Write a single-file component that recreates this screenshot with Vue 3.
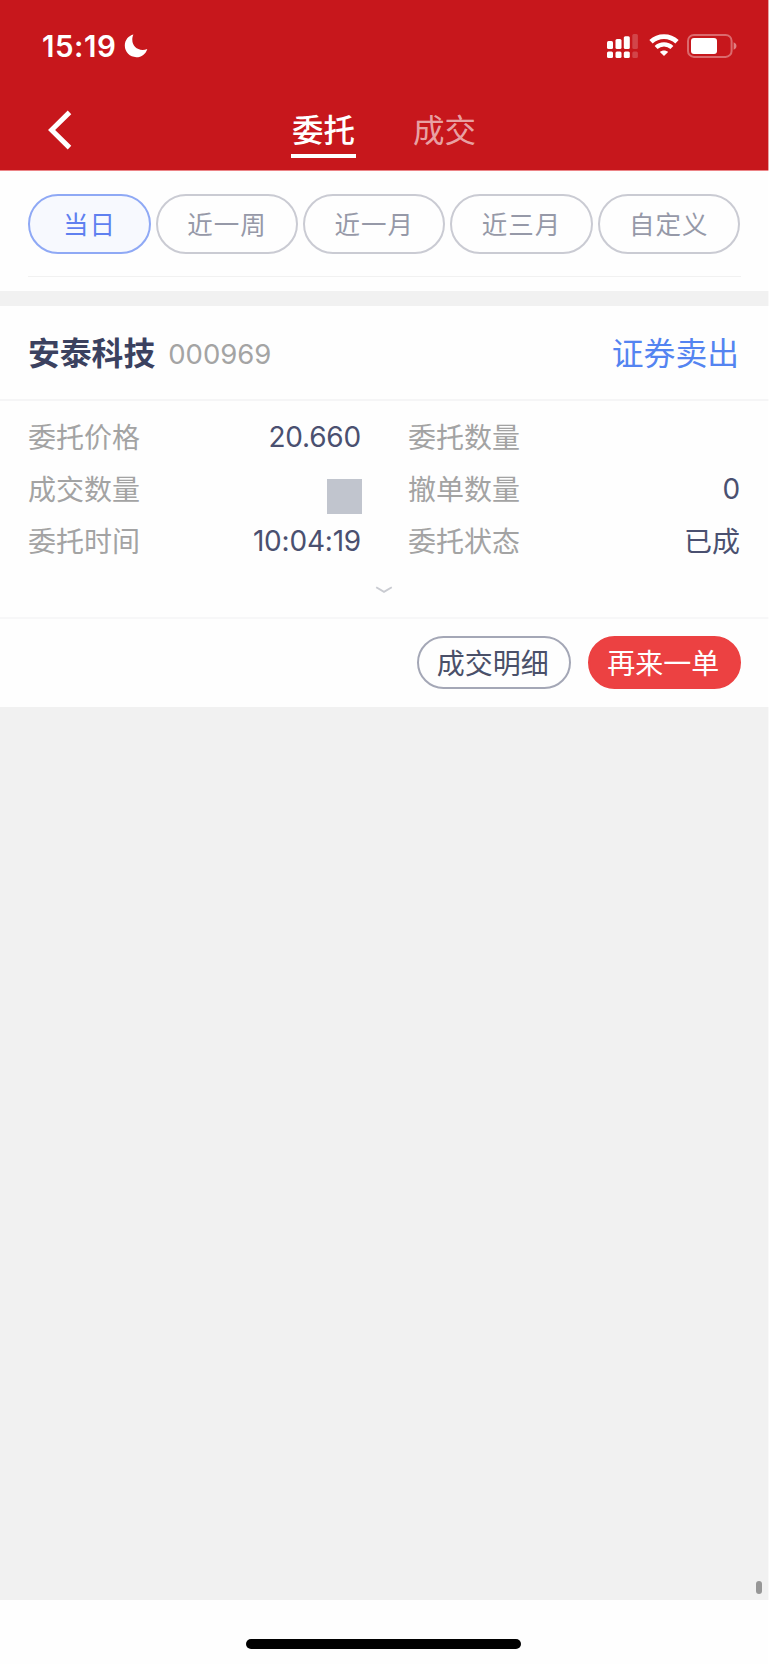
<template>
  <div class="page">
    <header class="header">
      <div class="status-bar">
        <div class="status-left">
          <span class="time">15:19</span>
          <svg class="moon" width="24" height="24" viewBox="0 0 24 24">
            <path d="M9.4 0.6C4.6 1.8 0.8 6 0.8 11.6C0.8 18.2 5.9 23.2 12.3 23.2C17.6 23.2 21.8 19.9 23.3 14.9C21.6 15.6 20.2 15.9 18.6 15.9C12.6 15.9 8.3 11.7 8.3 5.8C8.3 3.8 8.6 2.2 9.4 0.6Z" fill="#fff" />
          </svg>
        </div>
        <div class="status-right">
          <svg width="32" height="26" viewBox="0 0 32 26" fill="#fff">
            <rect x="0" y="8" width="6" height="8" rx="1.5" />
            <rect x="8.5" y="6" width="6" height="10" rx="1.5" />
            <rect x="16.8" y="3.3" width="6" height="12.7" rx="1.5" />
            <rect x="25.3" y="1" width="5.6" height="15" rx="1.5" opacity="0.2" />
            <rect x="0" y="18.6" width="6" height="6.4" rx="1.5" />
            <rect x="8.5" y="18.6" width="6" height="6.4" rx="1.5" />
            <rect x="16.8" y="18.6" width="6" height="6.4" rx="1.5" />
            <rect x="25.3" y="18.6" width="5.6" height="6.4" rx="1.5" opacity="0.2" />
          </svg>
          <svg class="wifi" width="30" height="26" viewBox="0 0 30 26">
            <path d="M2 8.7C9.3 1.8 20.7 1.8 28 8.7" fill="none" stroke="#fff" stroke-width="4.8" />
            <path d="M7.1 14.5C11.5 10.3 18.5 10.3 22.9 14.5" fill="none" stroke="#fff" stroke-width="4.2" />
            <path d="M15 23L10.9 18.9C13.1 16.9 16.9 16.9 19.1 18.9Z" fill="#fff" />
          </svg>
          <svg class="battery" width="50" height="26" viewBox="0 0 50 26">
            <rect x="1" y="1.9" width="43.6" height="22" rx="6" fill="none" stroke="#fff" stroke-opacity="0.36" stroke-width="2" />
            <rect x="4" y="5" width="26" height="16" rx="3" fill="#fff" />
            <path d="M46.6 9.3C50.4 10.6 50.4 15.4 46.6 16.7Z" fill="#fff" opacity="0.45" />
          </svg>
        </div>
      </div>
      <nav class="nav">
        <svg class="back" width="26" height="42" viewBox="0 0 26 42">
          <path d="M22.5 3.4L4.6 21L22.5 38.6" fill="none" stroke="#fff" stroke-width="5" />
        </svg>
        <div class="tabs">
          <span
            v-for="tab in tabs"
            :key="tab"
            class="tab"
            :class="{ active: tab === activeTab }"
            @click="activeTab = tab"
          >{{ tab }}</span>
        </div>
      </nav>
    </header>

    <section class="filter">
      <div class="filter-list">
        <button
          v-for="item in ranges"
          :key="item"
          class="pill"
          :class="{ active: item === activeRange }"
          @click="activeRange = item"
        >{{ item }}</button>
      </div>
    </section>

    <section class="order">
      <div class="order-head">
        <div class="stock">
          <span class="stock-name">安泰科技</span>
          <span class="stock-code">000969</span>
        </div>
        <span class="side">证券卖出</span>
      </div>

      <div class="order-body">
        <div class="fields">
          <div v-for="field in fields" :key="field.label" class="field">
            <span class="label">{{ field.label }}</span>
            <span v-if="field.masked" class="mask"></span>
            <span v-else class="value" :class="{ cjk: field.cjk }">{{ field.value }}</span>
          </div>
        </div>
        <svg class="expand" width="18" height="8" viewBox="0 0 18 8">
          <path d="M1.2 1.3L9 5.8L16.8 1.3" fill="none" stroke="#c9cbd1" stroke-width="1.9" />
        </svg>
      </div>

      <div class="order-foot">
        <button class="btn btn-plain">成交明细</button>
        <button class="btn btn-red">再来一单</button>
      </div>
    </section>

    <main class="blank">
      <i class="scroll-thumb"></i>
    </main>

    <footer class="home">
      <i class="home-bar"></i>
    </footer>
  </div>
</template>

<script setup>
import { ref } from 'vue'

const tabs = ['委托', '成交']
const activeTab = ref('委托')

const ranges = ['当日', '近一周', '近一月', '近三月', '自定义']
const activeRange = ref('当日')

const fields = [
  { label: '委托价格', value: '20.660' },
  { label: '委托数量', value: '' },
  { label: '成交数量', masked: true },
  { label: '撤单数量', value: '0' },
  { label: '委托时间', value: '10:04:19' },
  { label: '委托状态', value: '已成', cjk: true }
]
</script>

<style>
body {
  margin: 0;
  background: #fefefe;
}
</style>

<style scoped>
.page {
  position: relative;
  display: flex;
  flex-direction: column;
  width: 769px;
  height: 1664px;
  overflow: hidden;
  background: #fefefe;
  font-family: Inter, "Noto Sans CJK SC", sans-serif;
}

/* right edge of the screen */
.page::after {
  content: '';
  position: absolute;
  top: 0;
  right: 0;
  width: 1px;
  height: 100%;
  background: rgba(255, 255, 255, 0.6);
}

.header {
  height: 170px;
  background: #c7171c;
  border-bottom: 1px solid #ec8487;
}

.status-bar {
  display: flex;
  justify-content: space-between;
  align-items: center;
  height: 92px;
  padding: 0 32px 0 42px;
}

.status-left,
.status-right {
  display: flex;
  align-items: center;
}

.time {
  color: #fff;
  font-size: 29.5px;
  font-weight: 600;
  line-height: 36px;
  letter-spacing: 0.5px;
}

.moon {
  margin-left: 8px;
}

.wifi {
  margin-left: 10px;
}

.battery {
  margin-left: 8px;
}

.nav {
  display: flex;
  align-items: flex-start;
  height: 78px;
}

.back {
  margin: 17px 0 0 47px;
}

.tabs {
  display: flex;
  gap: 56px;
  margin-left: 218px;
}

.tab {
  box-sizing: border-box;
  height: 66px;
  width: 65px;
  padding-top: 16px;
  color: rgba(255, 255, 255, 0.62);
  font-size: 31.5px;
  line-height: 46px;
  text-align: center;
  white-space: nowrap;
}

.tab.active {
  color: #fff;
  font-weight: 500;
  border-bottom: 4px solid #fff;
}

.filter {
  box-sizing: border-box;
  height: 120px;
  padding: 23px 28px 0 28px;
}

.filter-list {
  display: flex;
  gap: 5px;
  height: 82px;
  border-bottom: 1px solid #f1f1f1;
}

.pill {
  box-sizing: border-box;
  flex: 0 0 142.2px;
  height: 60px;
  padding: 0 0 4px;
  border: 2px solid #cacbd3;
  border-radius: 30px;
  background: transparent;
  color: #9699a8;
  font-family: inherit;
  font-size: 25.5px;
  letter-spacing: 1px;
  white-space: nowrap;
}

.pill.active {
  flex-basis: 123px;
  border-color: #8fa9f5;
  background: #f7f9fe;
  color: #5f80f0;
}

.order {
  border-top: 15px solid #f1f1f1;
}

.order-head {
  box-sizing: border-box;
  display: flex;
  justify-content: space-between;
  align-items: center;
  height: 95px;
  padding: 2px 30px 0 28px;
  border-bottom: 2px solid #f5f5f6;
}

.stock {
  display: flex;
  align-items: center;
}

.stock-name {
  color: #3b415f;
  font-size: 31.8px;
  font-weight: 700;
  line-height: 46px;
}

.stock-code {
  margin-left: 13px;
  color: #a4a4a4;
  font-size: 27.5px;
  line-height: 46px;
}

.side {
  color: #5484f1;
  font-size: 31.8px;
  line-height: 46px;
}

.order-body {
  box-sizing: border-box;
  display: flex;
  flex-direction: column;
  align-items: center;
  height: 218px;
  padding-top: 10px;
  border-bottom: 2px solid #f7f7f8;
}

.fields {
  display: grid;
  grid-template-columns: 333px 332px;
  grid-auto-rows: 52px;
  column-gap: 47px;
  width: 712px;
  margin-right: 1px;
}

.field {
  display: flex;
  justify-content: space-between;
  align-items: center;
  font-size: 28px;
  line-height: 40px;
}

.label {
  padding-top: 2px;
  color: #a3a3a3;
}

.value {
  color: #4a5070;
  letter-spacing: -0.2px;
}

/* keeps the hanzi on the label's baseline */
.value.cjk {
  padding-top: 2px;
  letter-spacing: 0;
}

.mask {
  width: 35px;
  height: 35px;
  margin: 15px -1px 0 0;
  background: #c1c5ce;
}

.expand {
  margin: 19px 1px 0 0;
}

.order-foot {
  display: flex;
  justify-content: flex-end;
  gap: 17px;
  height: 71px;
  padding: 17px 28px 0 0;
}

.btn {
  box-sizing: border-box;
  width: 153.5px;
  height: 53px;
  padding: 3px 2px 0 0;
  border-radius: 27px;
  font-family: inherit;
  font-size: 28px;
  line-height: 46px;
  white-space: nowrap;
}

.btn-plain {
  border: 2px solid #a4a7b6;
  background: transparent;
  color: #4a5069;
}

.btn-red {
  border: 2px solid #ec4142;
  background: #ec4142;
  color: #fff;
}

.blank {
  position: relative;
  flex: 1;
  background: #f1f1f1;
}

.scroll-thumb {
  position: absolute;
  right: 7px;
  bottom: 6px;
  width: 6px;
  height: 13px;
  border-radius: 3px;
  background: #979797;
}

.home {
  display: flex;
  justify-content: center;
  height: 64px;
}

.home-bar {
  width: 275px;
  height: 10px;
  margin: 39px 2px 0 0;
  border-radius: 5px;
  background: #000;
}
</style>
